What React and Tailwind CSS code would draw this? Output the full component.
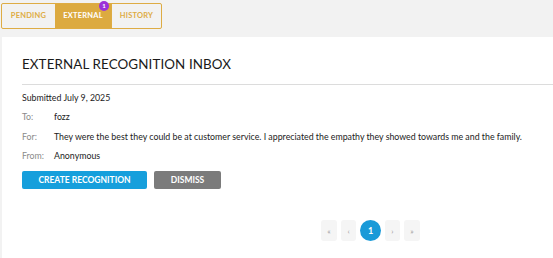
import React from "react";

export default function App() {
  const lato = { fontFamily: "Lato, 'Open Sans', sans-serif" };
  return (
    <div className="w-[553px] h-[258px] overflow-hidden bg-[#f2f2f2] relative" style={lato}>
      <div className="pt-[3px] pl-[1px] h-[37px]">
        <div className="flex h-[26px] w-fit border border-[#deac44] rounded-[2px] bg-[#f2f2f2]">
          <div className="w-[53px] flex items-center justify-center text-[7.5px] font-bold tracking-[0.2px] text-[#deac44]">PENDING</div>
          <div className="relative w-[56px] flex items-center justify-center text-[7.5px] font-bold tracking-[0.2px] text-white bg-[#dcaa40]">
            EXTERNAL
            <span className="absolute -top-[3px] right-[2px] w-[10px] h-[10px] rounded-full bg-[#9c31d8] text-white text-[6px] flex items-center justify-center leading-none">1</span>
          </div>
          <div className="w-[50px] flex items-center justify-center text-[7.5px] font-bold tracking-[0.2px] text-[#deac44] border-l border-[#deac44]">HISTORY</div>
        </div>
      </div>
      <div className="ml-[2px] bg-white h-[221px] pl-[20px]">
        <div className="pt-[21px] h-[47px] text-[13.4px] text-[#1a1a1a] leading-none tracking-[0.1px]">EXTERNAL RECOGNITION INBOX</div>
        <div className="border-t border-[#dcdcdc]" />
        <div className="pt-[7px] text-[8.8px] leading-[12px] text-[#222]">Submitted July 9, 2025</div>
        <div className="mt-[7px] flex flex-col gap-[7.5px] text-[8.8px] leading-[12px]">
          <div className="flex"><span className="w-[32px] text-[#8a8a8a]">To:</span><span className="text-[#222]">fozz</span></div>
          <div className="flex"><span className="w-[32px] text-[#8a8a8a]">For:</span><span className="text-[#222]">They were the best they could be at customer service. I appreciated the empathy they showed towards me and the family.</span></div>
          <div className="flex"><span className="w-[32px] text-[#8a8a8a]">From:</span><span className="text-[#222]">Anonymous</span></div>
        </div>
        <div className="mt-[9px] flex gap-[7px]">
          <button className="w-[125px] h-[18px] rounded-[2px] bg-[#169fdc] text-white text-[8.5px] font-bold flex items-center justify-center">CREATE RECOGNITION</button>
          <button className="w-[67px] h-[18px] rounded-[2px] bg-[#7b7b7b] text-white text-[8.5px] font-bold flex items-center justify-center">DISMISS</button>
        </div>
        <div className="w-[697px] mt-[31px] flex justify-center items-center gap-[4px] text-[8px] text-[#9a9a9a]">
          <div className="w-[16px] h-[21px] rounded-[3px] bg-[#f5f5f5] flex items-center justify-center">«</div>
          <div className="w-[15px] h-[21px] rounded-[3px] bg-[#f5f5f5] flex items-center justify-center">‹</div>
          <div className="w-[21px] h-[21px] rounded-full bg-[#1a9ad8] text-white font-bold text-[9px] flex items-center justify-center">1</div>
          <div className="w-[15px] h-[21px] rounded-[3px] bg-[#f5f5f5] flex items-center justify-center">›</div>
          <div className="w-[16px] h-[21px] rounded-[3px] bg-[#f5f5f5] flex items-center justify-center">»</div>
        </div>
      </div>
    </div>
  );
}
